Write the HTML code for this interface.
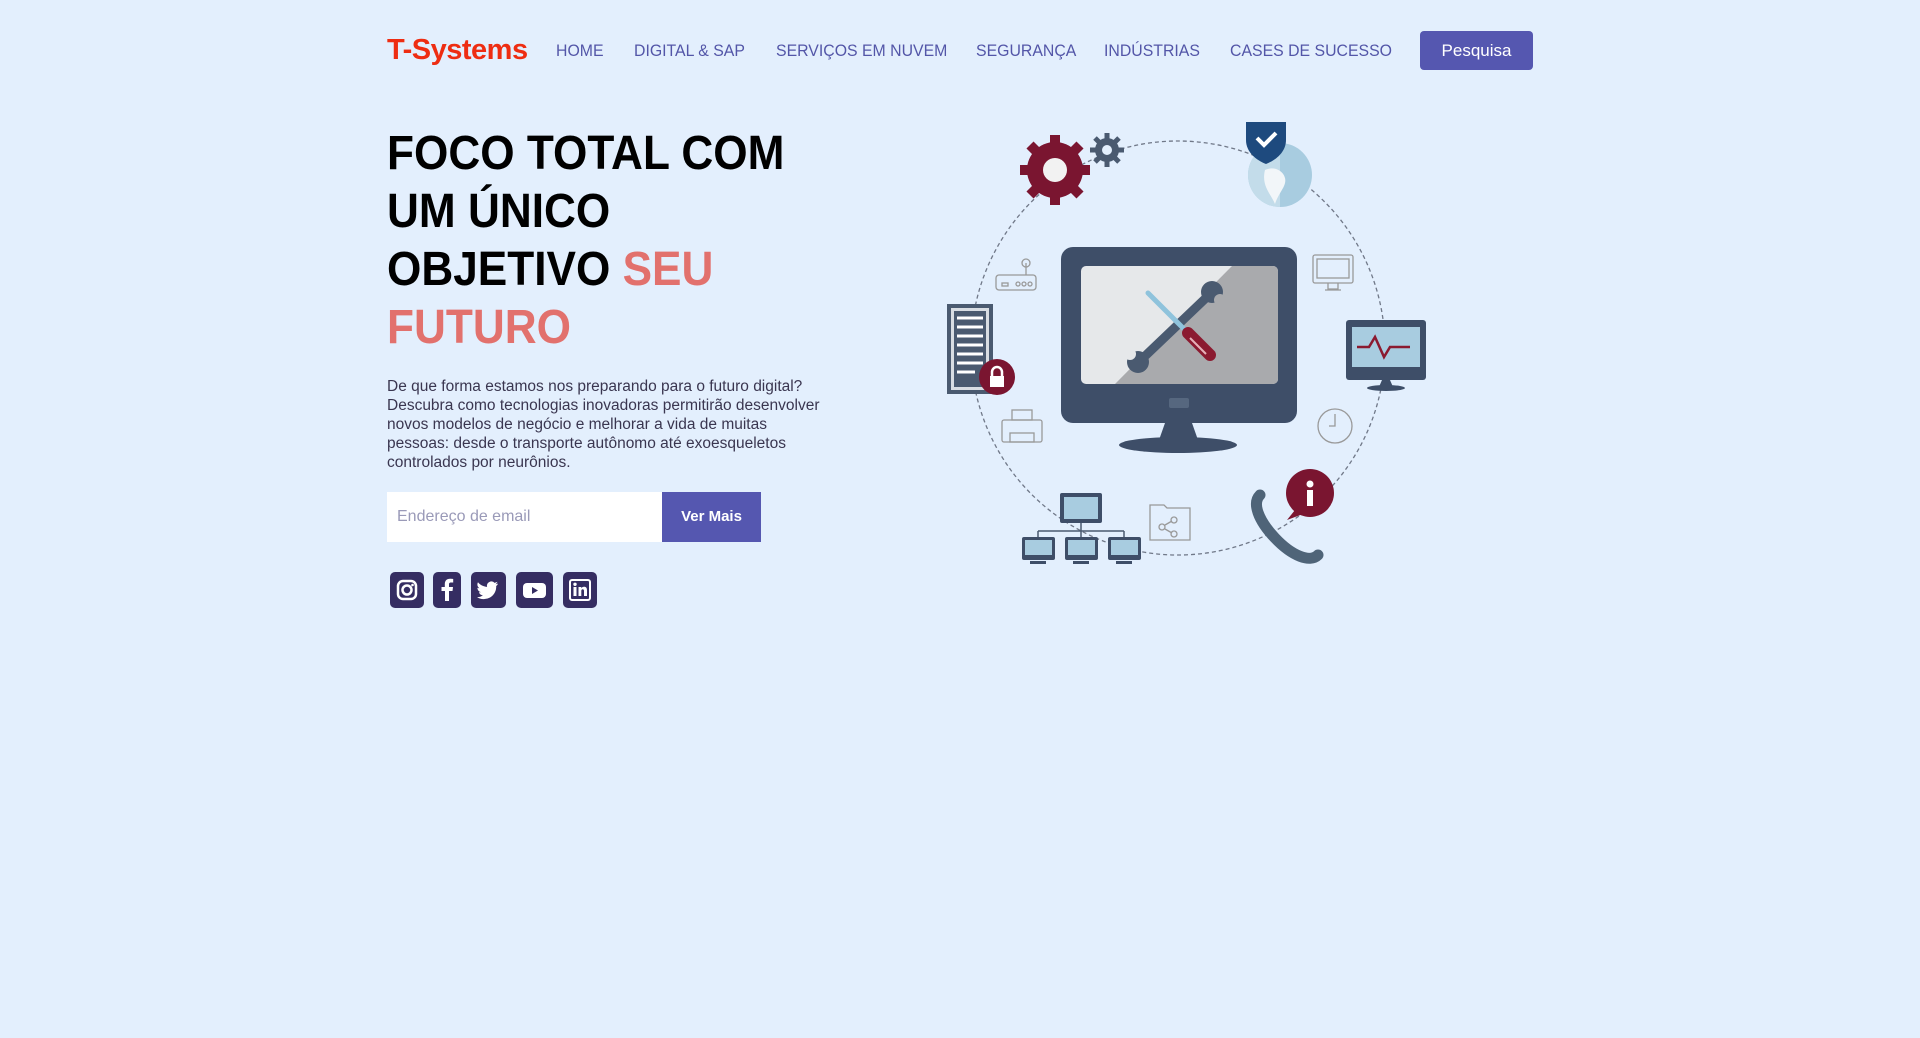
<!DOCTYPE html>
<html><head><meta charset="utf-8"><style>
*{margin:0;padding:0;box-sizing:border-box}
body{width:1920px;height:1038px;background:#e3effd;font-family:"Liberation Sans",Roboto,sans-serif;position:relative;overflow:hidden}
.a{position:absolute;white-space:nowrap}
.logo{left:387px;top:34px;font-size:29px;font-weight:bold;color:#ee2d12;letter-spacing:-0.5px}
.nav{top:42px;font-size:16.5px;color:#5356a8;transform:scaleX(0.96);transform-origin:left}
.btn{left:1420px;top:31px;width:113px;height:39px;background:#5557b0;border-radius:4px;color:#fff;font-size:17px;text-align:center;line-height:39px}
h1{position:absolute;left:387px;top:125px;font-size:48px;line-height:58px;font-weight:bold;color:#000;transform:scaleX(0.92);transform-origin:left;white-space:nowrap}
h1 span{color:#e2716d}
p.d{position:absolute;left:387px;top:377px;font-size:15.5px;line-height:19px;color:#3a3650;white-space:nowrap}
.inp{left:387px;top:492px;width:275px;height:50px;background:#fff;color:#9a9ab8;font-size:16px;line-height:50px;padding-left:10px}
.vm{left:662px;top:492px;width:99px;height:50px;background:#5557b0;color:#fff;font-size:15px;line-height:50px;text-align:center;font-weight:bold}
.s{position:absolute;top:572px;height:36px;background:#352d62;border-radius:5px}
</style></head><body>
<div class="a logo">T-Systems</div>
<div class="a nav" style="left:556px">HOME</div>
<div class="a nav" style="left:634px">DIGITAL &amp; SAP</div>
<div class="a nav" style="left:776px">SERVIÇOS EM NUVEM</div>
<div class="a nav" style="left:976px">SEGURANÇA</div>
<div class="a nav" style="left:1104px">INDÚSTRIAS</div>
<div class="a nav" style="left:1230px">CASES DE SUCESSO</div>
<div class="a btn">Pesquisa</div>
<h1>FOCO TOTAL COM<br>UM ÚNICO<br>OBJETIVO <span>SEU<br>FUTURO</span></h1>
<p class="d">De que forma estamos nos preparando para o futuro digital?<br>Descubra como tecnologias inovadoras permitirão desenvolver<br>novos modelos de negócio e melhorar a vida de muitas<br>pessoas: desde o transporte autônomo até exoesqueletos<br>controlados por neurônios.</p>
<div class="a inp">Endereço de email</div>
<div class="a vm">Ver Mais</div>
<div class="s" style="left:390px;width:34px"><svg width="34" height="36"><rect x="8" y="9" width="18" height="18" rx="5" fill="none" stroke="#fff" stroke-width="2.5"/><circle cx="17" cy="18" r="4.5" fill="none" stroke="#fff" stroke-width="2.5"/><circle cx="22.5" cy="13" r="1.3" fill="#fff"/></svg></div>
<div class="s" style="left:433px;width:28px"><svg width="28" height="36"><path d="M16 29V19h3.5l.5-4h-4v-2.5c0-1.2.4-2 2-2h2.2V7c-.4 0-1.7-.2-3.2-.2-3.2 0-5.2 1.9-5.2 5.4V15H8.5v4H12v10z" fill="#fff"/></svg></div>
<div class="s" style="left:471px;width:35px"><svg width="35" height="36"><path d="M27 11.5c-.8.4-1.6.6-2.5.7.9-.5 1.6-1.4 1.9-2.4-.8.5-1.8.9-2.8 1.1a4.4 4.4 0 0 0-7.5 4c-3.6-.2-6.9-1.9-9.1-4.6-1.2 2-.6 4.6 1.4 5.9-.7 0-1.4-.2-2-.5 0 2.1 1.5 4 3.5 4.4-.6.2-1.3.2-2 .1.6 1.8 2.3 3 4.1 3.1A8.8 8.8 0 0 1 6 25.1a12.4 12.4 0 0 0 19.2-11.1c.8-.6 1.5-1.3 1.8-2.5z" fill="#fff"/></svg></div>
<div class="s" style="left:516px;width:37px"><svg width="37" height="36"><rect x="7" y="11" width="23" height="15" rx="4" fill="#fff"/><path d="M16 15v7l6-3.5z" fill="#352d62"/></svg></div>
<div class="s" style="left:563px;width:34px"><svg width="34" height="36"><rect x="7" y="8" width="20" height="20" rx="2" fill="none" stroke="#fff" stroke-width="2"/><rect x="10.5" y="15" width="3" height="9" fill="#fff"/><circle cx="12" cy="12.3" r="1.7" fill="#fff"/><path d="M15.5 15h2.8v1.3c.6-1 1.6-1.5 2.8-1.5 2 0 2.9 1.2 2.9 3.5V24h-3v-5c0-1.1-.4-1.7-1.3-1.7-1 0-1.4.7-1.4 1.8V24h-2.8z" fill="#fff"/></svg></div>

<svg class="a" style="left:930px;top:100px" width="500" height="480" viewBox="0 0 500 480">
<circle cx="248" cy="248" r="207" fill="none" stroke="#707888" stroke-width="1.3" stroke-dasharray="4 3"/>
<rect x="131" y="147" width="236" height="176" rx="12" fill="#3e4e68"/>
<rect x="151" y="166" width="197" height="118" rx="5" fill="#e6e8ea"/>
<path d="M185 284L302 166H343a5 5 0 0 1 5 5V279a5 5 0 0 1-5 5Z" fill="#a9aaad"/>
<rect x="239" y="298" width="20" height="10" rx="2" fill="#56677f"/>
<path d="M235 323h27l6 17h-39z" fill="#3e4e68"/>
<ellipse cx="248" cy="345" rx="59" ry="8" fill="#3e4e68"/>
<line x1="213" y1="258" x2="278" y2="196" stroke="#4a5a70" stroke-width="9" stroke-linecap="round"/>
<circle cx="208" cy="262" r="11" fill="#4a5a70"/><circle cx="282" cy="192" r="11" fill="#4a5a70"/>
<circle cx="200" cy="254" r="6" fill="#e6e8ea"/><circle cx="290" cy="200" r="6" fill="#a9aaad"/>
<line x1="218" y1="193" x2="255" y2="230" stroke="#8fc3dc" stroke-width="5" stroke-linecap="round"/>
<line x1="258" y1="233" x2="280" y2="255" stroke="#8b1a30" stroke-width="12" stroke-linecap="round"/>
<line x1="260" y1="238" x2="276" y2="254" stroke="#e6b0b8" stroke-width="2"/>
<g fill="#7a1530"><circle cx="125" cy="70" r="28"/>
<g stroke="#7a1530" stroke-width="10"><line x1="125" y1="35" x2="125" y2="105"/><line x1="90" y1="70" x2="160" y2="70"/><line x1="100" y1="45" x2="150" y2="95"/><line x1="150" y1="45" x2="100" y2="95"/></g></g>
<circle cx="125" cy="70" r="12" fill="#f2f2f2"/>
<g fill="#4a5a70"><circle cx="177" cy="50" r="12"/><g stroke="#4a5a70" stroke-width="5"><line x1="177" y1="33" x2="177" y2="67"/><line x1="160" y1="50" x2="194" y2="50"/><line x1="165" y1="38" x2="189" y2="62"/><line x1="189" y1="38" x2="165" y2="62"/></g></g>
<circle cx="177" cy="50" r="5" fill="#e3effd"/>
<circle cx="350" cy="75" r="32" fill="#a8cce0"/>
<path d="M350 43a32 32 0 0 0 0 64z" fill="#c3dcea"/>
<path d="M335 70c8-4 18 0 20 8s-6 14-10 26c-4-10-14-18-10-34z" fill="#f2f6f9"/>
<path d="M316 22h40v18c0 12-10 20-20 24-10-4-20-12-20-24z" fill="#1e4a7e"/>
<path d="M327 38l7 7 12-12" fill="none" stroke="#fff" stroke-width="4"/>
<rect x="17" y="204" width="46" height="90" fill="#4a5a70"/>
<rect x="21" y="208" width="38" height="82" fill="#d8dde3"/>
<rect x="24" y="211" width="32" height="76" fill="#4a5a70"/>
<g stroke="#fff" stroke-width="3"><line x1="27" y1="218" x2="53" y2="218"/><line x1="27" y1="227" x2="53" y2="227"/><line x1="27" y1="236" x2="53" y2="236"/><line x1="27" y1="245" x2="53" y2="245"/><line x1="27" y1="254" x2="53" y2="254"/><line x1="27" y1="263" x2="53" y2="263"/><line x1="27" y1="272" x2="45" y2="272"/></g>
<circle cx="67" cy="277" r="18" fill="#7a1530"/>
<rect x="60" y="276" width="14" height="11" fill="#fff"/><path d="M62 276v-4a5 5 0 0 1 10 0v4" fill="none" stroke="#fff" stroke-width="2.5"/>
<g fill="none" stroke="#999" stroke-width="1.3">
<rect x="66" y="175" width="40" height="15" rx="3"/><line x1="96" y1="175" x2="96" y2="163"/><circle cx="96" cy="163" r="4"/>
<rect x="72" y="183" width="6" height="3"/><circle cx="88" cy="184" r="2"/><circle cx="94" cy="184" r="2"/><circle cx="100" cy="184" r="2"/>
<rect x="72" y="320" width="40" height="22" rx="2"/><rect x="82" y="310" width="20" height="10"/><rect x="80" y="333" width="24" height="9"/>
<rect x="383" y="155" width="40" height="28" rx="2"/><rect x="387" y="159" width="32" height="19"/><path d="M398 183v6h10v-6M395 190h16"/>
<circle cx="405" cy="326" r="17"/><path d="M405 314v12h-6"/>
<path d="M220 405h14l3 3h23v32h-40z"/><circle cx="232" cy="427" r="3"/><circle cx="244" cy="420" r="3"/><circle cx="244" cy="434" r="3"/><path d="M235 425l7-4M235 429l7 4"/>
</g>
<rect x="416" y="220" width="80" height="60" rx="3" fill="#3e4e68"/>
<rect x="422" y="227" width="68" height="40" fill="#a8cce0"/>
<path d="M427 247h12l6-10 9 20 6-10h20" fill="none" stroke="#8b1a30" stroke-width="2.5"/>
<path d="M452 280h8l3 7h-14z" fill="#3e4e68"/><ellipse cx="456" cy="288" rx="19" ry="3" fill="#3e4e68"/>
<path d="M330 395c-8 8-2 25 15 43s35 25 43 17" fill="none" stroke="#4f6478" stroke-width="11" stroke-linecap="round"/>
<circle cx="380" cy="393" r="24" fill="#7a1530"/>
<path d="M365 410l-8 10 16-6z" fill="#7a1530"/>
<rect x="377" y="390" width="6" height="16" fill="#fff"/><circle cx="380" cy="384" r="3.5" fill="#fff"/>
<g stroke="#4a5a70" stroke-width="1.5" fill="none"><path d="M151 423v8M108 431h86M108 431v6M151 431v6M194 431v6"/></g>
<rect x="130" y="393" width="42" height="30" rx="2" fill="#3e4e68"/><rect x="134" y="397" width="34" height="22" fill="#a8cce0"/>
<g fill="#3e4e68"><rect x="92" y="437" width="33" height="23" rx="2"/><rect x="135" y="437" width="33" height="23" rx="2"/><rect x="178" y="437" width="33" height="23" rx="2"/>
<rect x="100" y="461" width="16" height="3"/><rect x="143" y="461" width="16" height="3"/><rect x="186" y="461" width="16" height="3"/></g>
<g fill="#a8cce0"><rect x="95" y="440" width="27" height="15"/><rect x="138" y="440" width="27" height="15"/><rect x="181" y="440" width="27" height="15"/></g>
</svg>
</body></html>
